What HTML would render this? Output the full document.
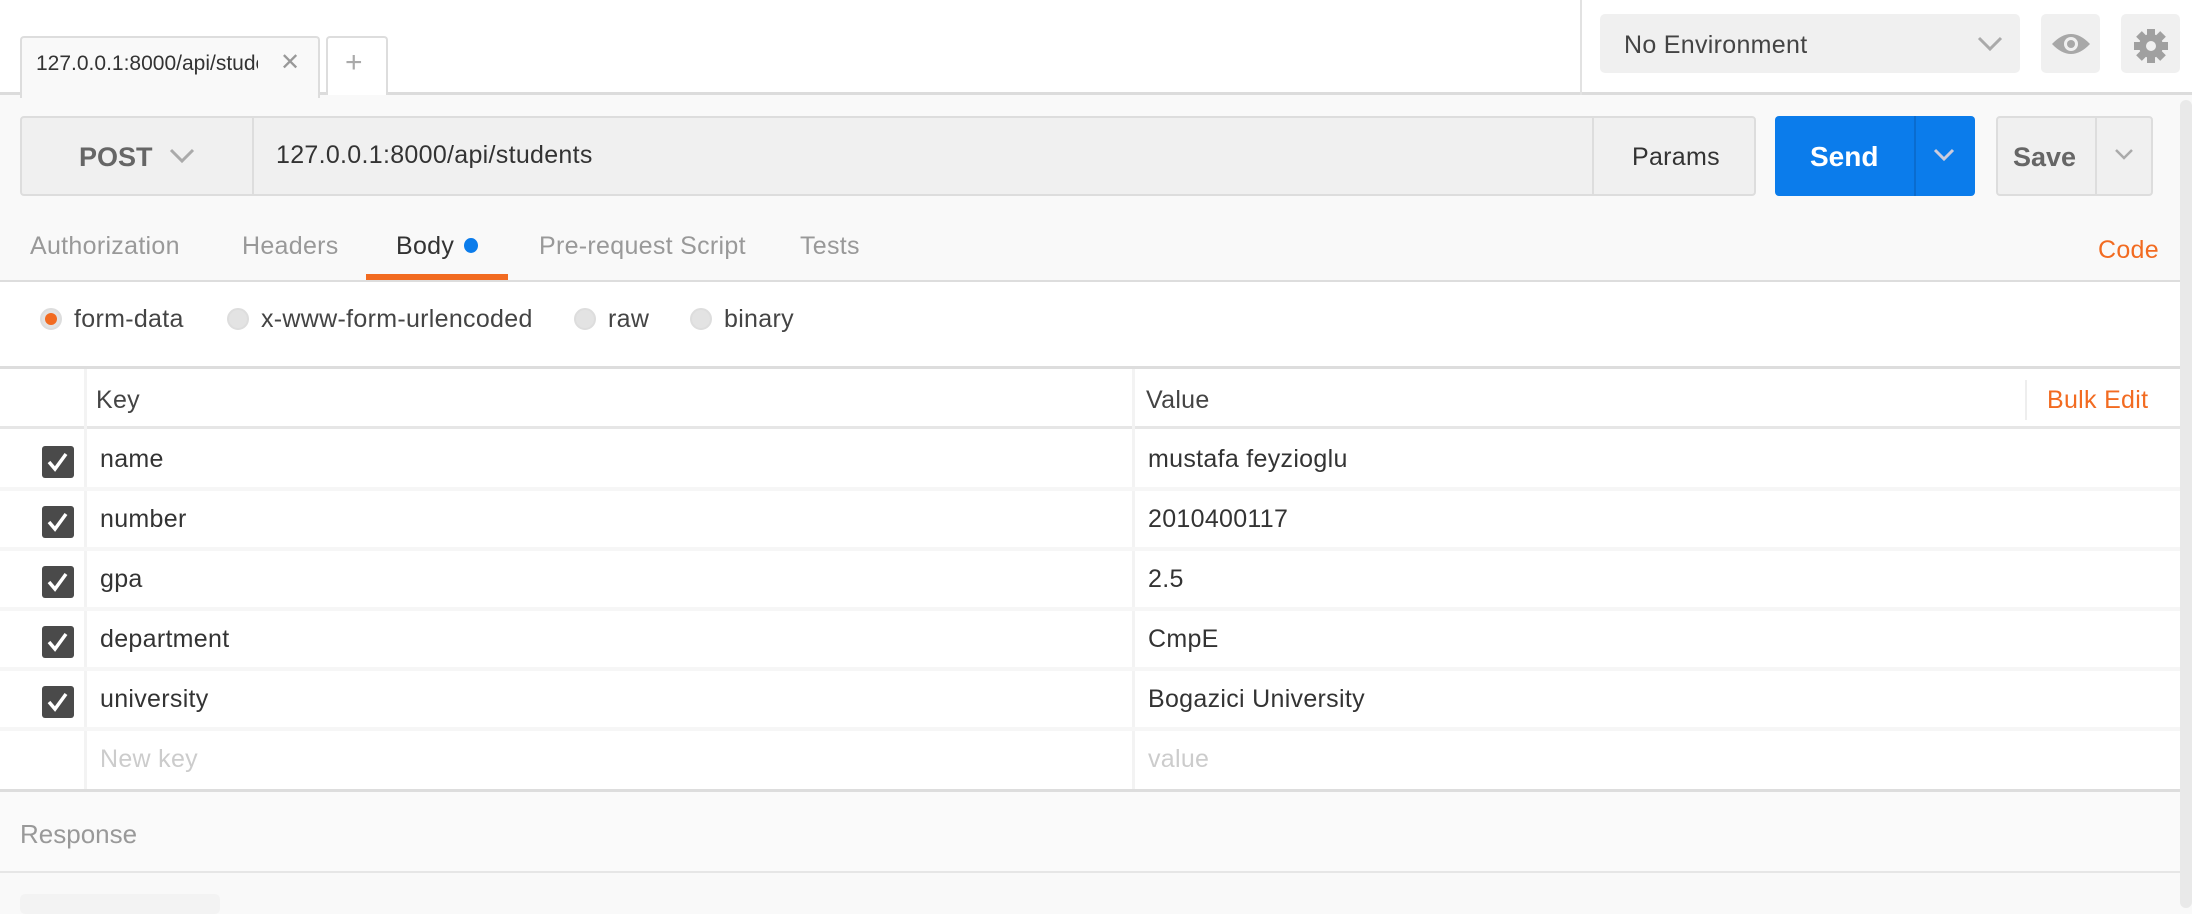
<!DOCTYPE html>
<html><head><meta charset="utf-8"><style>
*{box-sizing:border-box;margin:0;padding:0}
body{width:2192px;height:908px;overflow:hidden;background:#f9f9f9;font-family:"Liberation Sans",sans-serif;position:relative;color:#333}
.a{position:absolute}
.t{white-space:nowrap}
.f{font-size:25px;letter-spacing:0.3px}
</style></head><body>
<!-- top bar -->
<div class="a" style="left:0;top:0;width:2192px;height:95px;background:#fff;border-bottom:3px solid #dcdcdc"></div>
<div class="a" style="left:1580px;top:0;width:2px;height:95px;background:#e2e2e2"></div>
<div class="a" style="left:20px;top:36px;width:300px;height:62px;background:#f9f9f9;border:2px solid #ddd;border-bottom:none;border-radius:4px 4px 0 0"></div>
<div class="a t" style="left:36px;top:52px;font-size:21px;color:#333;width:222px;overflow:hidden">127.0.0.1:8000/api/students</div>
<div class="a t" style="left:280px;top:48px;font-size:24px;color:#999">✕</div>
<div class="a" style="left:326px;top:36px;width:62px;height:59px;background:#fff;border:2px solid #ddd;border-bottom:none;border-radius:4px 4px 0 0"></div>
<div class="a t" style="left:345px;top:46px;font-size:30px;color:#aaa">+</div>
<div class="a" style="left:1600px;top:14px;width:420px;height:59px;background:#f0f0f0;border-radius:5px"></div>
<div class="a t f" style="left:1624px;top:31px;color:#444">No Environment</div>
<svg class="a" style="left:1976px;top:34px" width="28" height="20"><path d="M3 4 L14 15 L25 4" stroke="#aaa" stroke-width="3" fill="none"/></svg>
<div class="a" style="left:2041px;top:14px;width:59px;height:59px;background:#f0f0f0;border-radius:5px"></div>
<svg class="a" style="left:2050px;top:30px" width="42" height="28"><path d="M2 14 Q21 -6 40 14 Q21 34 2 14Z" fill="#a8a8a8"/><circle cx="21" cy="14" r="7" fill="#f0f0f0"/><circle cx="21" cy="14" r="4" fill="#a8a8a8"/></svg>
<div class="a" style="left:2121px;top:14px;width:59px;height:59px;background:#f0f0f0;border-radius:5px"></div>
<svg class="a" style="left:2132px;top:27px" width="38" height="38" viewBox="0 0 38 38"><g fill="#a0a0a0"><circle cx="19" cy="19" r="12"/><rect x="15" y="2" width="8" height="34"/><rect x="2" y="15" width="34" height="8"/><rect x="15" y="2" width="8" height="34" transform="rotate(45 19 19)"/><rect x="15" y="2" width="8" height="34" transform="rotate(-45 19 19)"/></g><circle cx="19" cy="19" r="5" fill="#f0f0f0"/></svg>
<!-- scrollbar -->
<div class="a" style="left:2180px;top:100px;width:12px;height:808px;background:#e9e9e9;border-radius:6px"></div>
<!-- url bar -->
<div class="a" style="left:20px;top:116px;width:1736px;height:80px;background:#f0f0f0;border:2px solid #ddd;border-radius:4px"></div>
<div class="a" style="left:252px;top:118px;width:2px;height:76px;background:#ddd"></div>
<div class="a" style="left:1592px;top:118px;width:2px;height:76px;background:#ddd"></div>
<div class="a t" style="left:79px;top:142px;font-size:27px;font-weight:bold;color:#666">POST</div>
<svg class="a" style="left:168px;top:146px" width="28" height="20"><path d="M3 4 L14 15 L25 4" stroke="#aaa" stroke-width="3" fill="none"/></svg>
<div class="a t f" style="left:276px;top:141px;color:#333">127.0.0.1:8000/api/students</div>
<div class="a t f" style="left:1632px;top:143px;color:#333">Params</div>
<div class="a" style="left:1775px;top:116px;width:200px;height:80px;background:#0b7ceb;border-radius:4px"></div>
<div class="a" style="left:1914px;top:116px;width:2px;height:80px;background:#0a6ccf"></div>
<div class="a t" style="left:1810px;top:141px;font-size:28px;font-weight:bold;color:#fff">Send</div>
<svg class="a" style="left:1930px;top:146px" width="28" height="20"><path d="M5 4 L14 13 L23 4" stroke="#ccd" stroke-width="3" fill="none"/></svg>
<div class="a" style="left:1996px;top:116px;width:157px;height:80px;background:#f0f0f0;border:2px solid #ddd;border-radius:4px"></div>
<div class="a" style="left:2095px;top:118px;width:2px;height:76px;background:#ddd"></div>
<div class="a t" style="left:2013px;top:142px;font-size:27px;font-weight:bold;color:#666">Save</div>
<svg class="a" style="left:2112px;top:146px" width="24" height="18"><path d="M4 4 L12 12 L20 4" stroke="#aaa" stroke-width="2.5" fill="none"/></svg>
<!-- tabs -->
<div class="a t f" style="left:30px;top:232px;color:#999">Authorization</div>
<div class="a t f" style="left:242px;top:232px;color:#999">Headers</div>
<div class="a t f" style="left:396px;top:232px;color:#333">Body</div>
<div class="a" style="left:464px;top:238px;width:14px;height:15px;border-radius:50%;background:#0b7ceb"></div>
<div class="a t f" style="left:539px;top:232px;color:#999">Pre-request Script</div>
<div class="a t f" style="left:800px;top:232px;color:#999">Tests</div>
<div class="a t f" style="left:2098px;top:236px;color:#f26b21">Code</div>
<div class="a" style="left:366px;top:274px;width:142px;height:6px;background:#f26b21"></div>
<div class="a" style="left:0;top:280px;width:2180px;height:2px;background:#ddd"></div>
<!-- body options -->
<div class="a" style="left:0;top:282px;width:2180px;height:86px;background:#fff"></div>
<div class="a" style="left:40px;top:308px;width:22px;height:22px;border-radius:50%;background:#e3e3e3;border:2px solid #ddd"></div>
<div class="a" style="left:45px;top:313px;width:12px;height:12px;border-radius:50%;background:#f26b21"></div>
<div class="a t f" style="left:74px;top:305px;color:#444">form-data</div>
<div class="a" style="left:227px;top:308px;width:22px;height:22px;border-radius:50%;background:#e3e3e3;border:2px solid #ddd"></div>
<div class="a t f" style="left:261px;top:305px;color:#444">x-www-form-urlencoded</div>
<div class="a" style="left:574px;top:308px;width:22px;height:22px;border-radius:50%;background:#e3e3e3;border:2px solid #ddd"></div>
<div class="a t f" style="left:608px;top:305px;color:#444">raw</div>
<div class="a" style="left:690px;top:308px;width:22px;height:22px;border-radius:50%;background:#e3e3e3;border:2px solid #ddd"></div>
<div class="a t f" style="left:724px;top:305px;color:#444">binary</div>
<!-- table -->
<div class="a" style="left:0;top:366px;width:2180px;height:3px;background:#ddd"></div>
<div class="a" style="left:0;top:369px;width:2180px;height:420px;background:#fff"></div>
<div class="a" style="left:0;top:369px;width:2180px;height:60px;background:#fff;border-bottom:3px solid #e6e6e6"></div>
<div class="a" style="left:84px;top:369px;width:3px;height:420px;background:#f3f3f3"></div>
<div class="a" style="left:1132px;top:369px;width:3px;height:420px;background:#f3f3f3"></div>
<div class="a" style="left:2025px;top:380px;width:2px;height:40px;background:#eee"></div>
<div class="a t f" style="left:96px;top:386px;color:#444">Key</div>
<div class="a t f" style="left:1146px;top:386px;color:#444">Value</div>
<div class="a t f" style="left:2047px;top:386px;color:#f26b21">Bulk Edit</div>

<div class="a" style="left:0;top:487px;width:2180px;height:4px;background:#f6f6f6"></div>
<div class="a" style="left:0;top:547px;width:2180px;height:4px;background:#f6f6f6"></div>
<div class="a" style="left:0;top:607px;width:2180px;height:4px;background:#f6f6f6"></div>
<div class="a" style="left:0;top:667px;width:2180px;height:4px;background:#f6f6f6"></div>
<div class="a" style="left:0;top:727px;width:2180px;height:4px;background:#f6f6f6"></div>

<svg class="a" style="left:0;top:0" width="80" height="908">
<g fill="#4a4a4a"><rect x="42" y="446" width="32" height="32" rx="3"/><rect x="42" y="506" width="32" height="32" rx="3"/><rect x="42" y="566" width="32" height="32" rx="3"/><rect x="42" y="626" width="32" height="32" rx="3"/><rect x="42" y="686" width="32" height="32" rx="3"/></g>
<g stroke="#fff" stroke-width="3.5" fill="none">
<path d="M49 462 L55 469 L66 454"/><path d="M49 522 L55 529 L66 514"/><path d="M49 582 L55 589 L66 574"/><path d="M49 642 L55 649 L66 634"/><path d="M49 702 L55 709 L66 694"/>
</g></svg>
<div class="a t f" style="left:100px;top:445px;color:#333">name</div>
<div class="a t f" style="left:100px;top:505px;color:#333">number</div>
<div class="a t f" style="left:100px;top:565px;color:#333">gpa</div>
<div class="a t f" style="left:100px;top:625px;color:#333">department</div>
<div class="a t f" style="left:100px;top:685px;color:#333">university</div>
<div class="a t f" style="left:100px;top:745px;color:#ccc">New key</div>
<div class="a t f" style="left:1148px;top:445px;color:#333">mustafa feyzioglu</div>
<div class="a t f" style="left:1148px;top:505px;color:#333">2010400117</div>
<div class="a t f" style="left:1148px;top:565px;color:#333">2.5</div>
<div class="a t f" style="left:1148px;top:625px;color:#333">CmpE</div>
<div class="a t f" style="left:1148px;top:685px;color:#333">Bogazici University</div>
<div class="a t f" style="left:1148px;top:745px;color:#ccc">value</div>
<div class="a" style="left:0;top:789px;width:2180px;height:3px;background:#ddd"></div>
<!-- response -->
<div class="a" style="left:0;top:792px;width:2180px;height:80px;background:#fafafa"></div>
<div class="a t" style="left:20px;top:819px;font-size:26px;color:#999">Response</div>
<div class="a" style="left:0;top:871px;width:2180px;height:2px;background:#e6e6e6"></div>
<div class="a" style="left:20px;top:894px;width:200px;height:20px;background:#f3f3f3;border-radius:5px"></div>
</body></html>
